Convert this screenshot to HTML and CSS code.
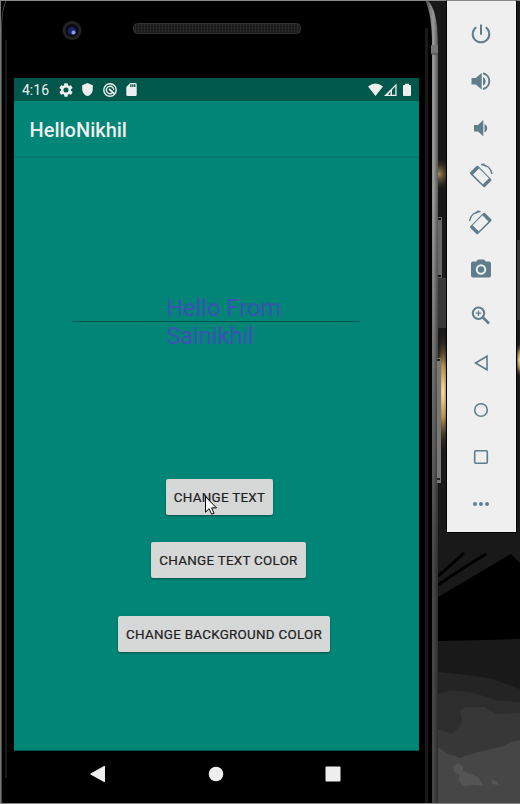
FILE: index.html
```html
<!DOCTYPE html>
<html lang="en">
<head>
<meta charset="utf-8">
<title>HelloNikhil</title>
<link rel="stylesheet" href="styles.css">
</head>
<body>
<svg class="backdrop" viewBox="0 0 520 804" aria-hidden="true">
  <defs>
    <linearGradient id="metal" x1="0" x2="1" y1="0" y2="0">
      <stop offset="0" stop-color="#333"/><stop offset=".35" stop-color="#777"/><stop offset=".65" stop-color="#999"/><stop offset="1" stop-color="#555"/>
    </linearGradient>
    <linearGradient id="fade" x1="0" x2="0" y1="0" y2="1">
      <stop offset=".25" stop-color="#000" stop-opacity="0"/><stop offset=".7" stop-color="#111" stop-opacity=".6"/><stop offset="1" stop-color="#111" stop-opacity=".6"/>
    </linearGradient>
    <radialGradient id="glow"><stop offset="0" stop-color="#ffe6a8"/><stop offset=".45" stop-color="#a98a45"/><stop offset="1" stop-color="#1a1a1a" stop-opacity="0"/></radialGradient>
    <radialGradient id="dimglow"><stop offset="0" stop-color="#a58a52"/><stop offset="1" stop-color="#1a1a1a" stop-opacity="0"/></radialGradient>
    <pattern id="mesh" width="3" height="3" patternUnits="userSpaceOnUse"><rect width="3" height="3" fill="#1c1c1c"/><path d="M0 0h1v2H0z" fill="#303030"/></pattern>
  </defs>
  <rect width="520" height="804" fill="#191919"/>
  <path d="M438 278h9v50h-9zM517 240h3v80h-3z" fill="#383838"/>
  <ellipse cx="439" cy="174" rx="14" ry="17" fill="url(#dimglow)"/>
  <ellipse cx="443" cy="392" rx="8" ry="62" fill="url(#glow)"/>
  <ellipse cx="520" cy="360" rx="5" ry="19" fill="url(#glow)"/>
  <path d="M438 597l73-43 9 9v76l-35 1-47 1z" fill="#000"/>
  <path d="M438 576q12-10 26-23M438 585q20-14 48-31" fill="none" stroke="#000" stroke-width="3"/>
  <path d="M438 672l30 3 25 4 27 10v115h-82z" fill="#242424"/>
  <path d="M438 694l14-4 19 2 25 8 24 2v102h-82z" fill="#2d2d2d"/>
  <path d="M438 729l15 5 9-12-2-12 6-3h18l13 7 23-1v91h-82z" fill="#373737"/>
  <path d="M438 747l8 6 14 5 18-6 26-6 6-4 10-2v64h-82z" fill="#464646"/>
  <path d="M453 766l5-3 5 3v5l15 6 6 9-10-1-10 1-6-6 2-5-6-3zM491 780l6 1 2 4-7-1z" fill="#545454"/>
  <path d="M0 0h424q14 10 14 46v758H0z" fill="#000"/>
  <path d="M427 0q11 9 11 46v758h-6V44q0-29-7-44z" fill="url(#metal)"/>
  <path d="M427 0q11 9 11 46v758h-6V44q0-29-7-44z" fill="url(#fade)"/>
  <path d="M425 28h3v776h-3z" fill="#191919"/>
  <path d="M431 45h7v9h-7z" fill="#777"/><path d="M431 54h7" stroke="#444"/>
  <path d="M438 217h4v61h-4z" fill="#686868"/><path d="M438 219h3M438 276h3" stroke="#111" stroke-width="2"/>
  <path d="M437 358h4v125h-4z" fill="#777"/><path d="M437 360h3M437 479h3" stroke="#222" stroke-width="2"/>
  <path d="M5 40h2v738H5z" fill="#191919"/>
  <path d="M1.500 804V28Q2 8 6 1" fill="none" stroke="#464646"/>
  <path d="M.5 0v804" stroke="#777"/>
  <circle cx="72" cy="30.500" r="9.500" fill="#222"/><circle cx="72" cy="30.500" r="6.500" fill="#0b0b12"/>
  <circle cx="72" cy="31" r="4" fill="#17246a"/><circle cx="73.500" cy="32.500" r="2" fill="#879be8"/>
  <rect x="133.500" y="23.500" width="167" height="10" rx="4" fill="url(#mesh)" stroke="#333"/>
  <path d="M0 .5h520M0 803.500h520" stroke="#888"/>
</svg>
<div class="desktop">
  <main class="phone">
    <div class="status">
      <span class="clock">4:16</span>
      <svg class="ico gear" viewBox="2 2 20 20"><path d="M19.140 12.940c.04-.3.06-.61.06-.94s-.02-.64-.07-.94l2.030-1.580a.49.49 0 0 0 .12-.61l-1.920-3.320a.49.49 0 0 0-.59-.22l-2.390.96a7 7 0 0 0-1.620-.94l-.36-2.540A.48.48 0 0 0 13.920 2.400h-3.840a.48.48 0 0 0-.48.41l-.36 2.540a7 7 0 0 0-1.620.94l-2.390-.96a.48.48 0 0 0-.59.22L2.720 8.870a.48.48 0 0 0 .12.61l2.030 1.580a6 6 0 0 0 0 1.880l-2.030 1.580a.49.49 0 0 0-.12.61l1.920 3.320c.12.22.37.29.59.22l2.390-.96c.5.380 1.030.7 1.620.94l.36 2.540c.05.24.24.41.48.41h3.840c.24 0 .44-.17.480-.41l.36-2.540a7 7 0 0 0 1.620-.94l2.390.96c.22.08.47 0 .59-.22l1.920-3.320a.49.49 0 0 0-.12-.61zM12 15.600a3.600 3.600 0 1 1 0-7.200 3.600 3.600 0 0 1 0 7.200z"/></svg>
      <svg class="ico shield" viewBox="3 1 18 22"><path d="M12 1L3 5v6c0 5.550 3.840 10.740 9 12 5.160-1.260 9-6.450 9-12V5z"/></svg>
      <svg class="ico data" viewBox="0 0 14 14"><g fill="none" stroke="#eee"><circle cx="7" cy="7" r="6.200" stroke-width="1.400"/><path d="M9.300 9.900A3.700 3.700 0 1 1 10.700 7.300" stroke-width="1.400"/><path d="M6 6l5.300 4.600" stroke-width="1.800"/></g></svg>
      <svg class="ico sd" viewBox="4 2 16 20"><path d="M18 2h-8L4 8v12a2 2 0 0 0 2 2h12a2 2 0 0 0 2-2V4a2 2 0 0 0-2-2zm-6 6h-2V4h2zm3 0h-2V4h2zm3 0h-2V4h2z"/></svg>
      <svg class="signals" viewBox="0 0 44 14"><path d="M0 3.600Q7.500-2.400 15 3.600L7.500 13zM16 13L28.600.5V13zM35 2h2V.7h4V2h1.200q.8 0 .8.800v9.400q0 .8-.8.800h-6.400q-.8 0-.8-.8V2.800q0-.8.800-.8z"/><path d="M22.500 8.500v3.300H20zM24 7l3.300-3.400v8.200H24z" fill="#00574b"/></svg>
    </div>
    <header class="appbar"><h1>HelloNikhil</h1></header>
    <section class="content">
      <div class="field"><p class="greeting">Hello From<br>Sainikhil</p></div>
      <button class="btn change-text">CHANGE TEXT</button>
      <button class="btn change-color">CHANGE TEXT COLOR</button>
      <button class="btn change-bg">CHANGE BACKGROUND COLOR</button>
    </section>
    <nav class="navbar">
      <svg viewBox="0 0 16 16"><path d="M1 7.200L14 0q1-.3 1 .7v14.600q0 1-1 .7L1 8.800q-1.200-.8 0-1.600z"/></svg>
      <svg viewBox="0 0 16 16"><circle cx="8" cy="8" r="7.300"/></svg>
      <svg viewBox="0 0 16 16"><rect x=".5" y=".5" width="15" height="15" rx="1"/></svg>
    </nav>
  </main>
  <aside class="tools">
    <svg viewBox="0 0 24 24"><path d="M12 2.500v10.300M7.300 5.200a8.300 8.300 0 1 0 9.400 0" class="line"/></svg>
    <svg viewBox="0 0 24 24"><path d="M2.500 9v6.500h4.200l6 5V4l-6 5zM14 8.100v8.300c1.700-.8 2.700-2.300 2.700-4.100S15.700 9 14 8.100z"/><path d="M14 4.200a8.100 8.100 0 0 1 0 15.800" class="line"/></svg>
    <svg viewBox="0 0 24 24"><path d="M5 9v6.500h4l5.300 4.800V4L9 9zM15.500 8.100v8.300c1.700-.8 2.700-2.300 2.700-4.100s-1-3.300-2.700-4.200z"/></svg>
    <svg viewBox="0 0 24 24"><g id="rotate"><path fill-rule="evenodd" d="M1.400 9.300L7.500 3.200q1-1 2 0L22 15.900q1 1 0 2L16.200 23.700q-1 1-2 0L1.400 11.300q-1-1 0-2zM4 11.600l10 10L20.100 15.400 9.900 5.200z"/><path d="M1.200 9.500L8 2.700l2.200 2.300-6.700 6.800zM14 21.200l6.300-6.300 2 2-6.400 6.400z"/><path d="M12 1.600Q21 1.700 23 11" class="line thin"/><path d="M11.500 1l3.500-.6 2.800 4z"/></g></svg>
    <svg viewBox="0 0 24 24"><use href="#rotate" transform="matrix(-1 0 0 1 23.500 0)"/></svg>
    <svg viewBox="0 0 24 24"><path fill-rule="evenodd" d="M9 2.500L7.300 4.500H4q-2 0-2 2v12q0 2 2 2h16q2 0 2-2v-12q0-2-2-2h-3.300L15 2.500zM12 7.300a5.200 5.200 0 1 1 0 10.400 5.200 5.200 0 0 1 0-10.400z"/><circle cx="12" cy="12.500" r="3.200"/></svg>
    <svg viewBox="0 0 24 24"><circle cx="9.500" cy="9.200" r="5.700" class="line"/><path d="M14 13.500l6 6" class="line thick"/><path d="M9.500 6.400v5.600M6.700 9.200h5.600" class="line thin"/></svg>
    <svg viewBox="0 0 24 24"><path d="M18 5.200v13.600L6.500 12z" class="line mid"/></svg>
    <svg viewBox="0 0 24 24"><circle cx="12" cy="12" r="6.300" class="line mid"/></svg>
    <svg viewBox="0 0 24 24"><rect x="5.700" y="5.700" width="12.600" height="12.600" rx="1" class="line mid"/></svg>
    <svg viewBox="0 0 24 24"><circle cx="6" cy="12" r="2"/><circle cx="12" cy="12" r="2"/><circle cx="18" cy="12" r="2"/></svg>
  </aside>
</div>
<svg class="cursor" viewBox="0 0 12 19"><path d="M.5 .7v15.500l3.600-3.500 2.500 5.500 2.400-1-2.400-5.300h4.900z" fill="#fff" stroke="#000"/></svg>
</body>
</html>
```
FILE: styles.css
```css
* { box-sizing: border-box; }
body {
  position: relative;
  width: 520px;
  height: 804px;
  margin: 0;
  overflow: hidden;
  background: #191919;
  font-family: Roboto, sans-serif;
}
svg { display: block; }
.backdrop { position: absolute; inset: 0; width: 520px; height: 804px; }
.desktop {
  position: relative;
  display: flex;
  align-items: flex-start;
  justify-content: space-between;
  padding: 0 3px 0 14px;
}
.phone { width: 405px; padding-top: 78px; }
.status {
  display: flex;
  align-items: center;
  height: 23px;
  padding: 0 8px;
  background: #00574b;
  color: #eee;
}
.clock { width: 37px; padding-top: 1px; font-size: 14px; line-height: 16px; }
.ico, .signals { fill: #eee; }
.gear { width: 14px; height: 14px; }
.shield { width: 11px; height: 13px; margin-left: 9px; }
.data { width: 14px; height: 14px; margin-left: 10px; }
.sd { width: 11px; height: 13px; margin-left: 9px; }
.signals { width: 44px; height: 14px; margin-right: -1px; margin-left: auto; }
.appbar {
  display: flex;
  align-items: center;
  height: 55px;
  padding: 2px 15.500px 0;
  background: #008577;
}
.appbar h1 { margin: 0; color: #eee; font-size: 20px; font-weight: 500; line-height: 24px; }
.content {
  display: flex;
  flex-direction: column;
  align-items: flex-start;
  height: 595px;
  background: #008577;
  border-top: 2px solid #007b6e;
  border-bottom: 1px solid #00574b;
}
.field {
  width: 288px;
  height: 56px;
  margin: 136px 0 129px 58px;
  padding-left: 94.500px;
  background: linear-gradient(#00574b, #00574b) 0 27px / 100% 1px no-repeat;
}
.greeting { margin: 0; color: #3f51b5; font-size: 23.600px; line-height: 28px; white-space: nowrap; }
.btn {
  flex: none;
  height: 36px;
  padding: 1px 0 0;
  border: 0;
  border-radius: 2px;
  background: #d6d7d7;
  box-shadow: 0 1px 2px rgba(0, 0, 0, .4);
  color: #202020;
  font: 400 13.400px/18px Roboto, sans-serif;
  letter-spacing: .27px;
  -webkit-text-stroke: .2px #202020;
  white-space: nowrap;
}
.change-text { width: 107px; margin-left: 152px; }
.change-color { width: 155px; margin: 27px 0 0 137px; }
.change-bg { width: 212px; margin: 38px 0 0 104px; }
.navbar {
  display: flex;
  align-items: center;
  justify-content: space-between;
  height: 46px;
  padding: 0 78px 0 76px;
}
.navbar svg { width: 16px; height: 16px; fill: #eee; }
.tools {
  display: flex;
  flex-direction: column;
  align-items: flex-start;
  gap: 23px;
  width: 71px;
  height: 533px;
  padding: 21px 0 0 22px;
  background: #efefef;
  border: 1px solid #000;
  border-top-color: #888;
}
.tools svg { flex: none; width: 24px; height: 24px; fill: #607d8b; overflow: visible; }
.tools .line { fill: none; stroke: #607d8b; stroke-width: 2; }
.tools .thick { stroke-width: 2.500; }
.tools .mid { stroke-width: 1.600; }
.tools .thin { stroke-width: 1.300; }
.cursor { position: absolute; left: 205px; top: 496px; width: 12px; height: 19px; }
```
